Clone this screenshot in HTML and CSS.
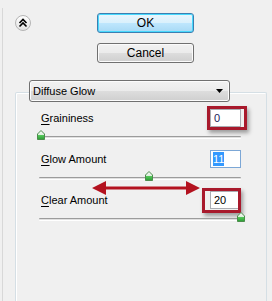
FILE: index.html
```html
<!DOCTYPE html>
<html>
<head>
<meta charset="utf-8">
<link rel="stylesheet" href="styles.css">
</head>
<body>
<div class="page">
  <div class="top">
    <div class="collapse">
      <svg width="16" height="16" viewBox="0 0 16 16">
        <defs>
          <linearGradient id="cg" x1="0" y1="0" x2="0" y2="1">
            <stop offset="0" stop-color="#ffffff"/>
            <stop offset="1" stop-color="#e2e2e2"/>
          </linearGradient>
        </defs>
        <circle cx="8" cy="8" r="7.5" fill="url(#cg)" stroke="#b4b4b4"/>
        <path d="M4.5 8 L8 4.5 L11.5 8" fill="none" stroke="#000" stroke-width="1.6"/>
        <path d="M4.5 11.5 L8 8 L11.5 11.5" fill="none" stroke="#000" stroke-width="1.6"/>
      </svg>
    </div>
    <div class="buttons">
      <div class="btn btn-default">OK</div>
      <div class="btn">Cancel</div>
    </div>
  </div>

  <div class="group">
    <div class="select">
      <span>Diffuse Glow</span>
      <svg class="caret" width="7" height="4" viewBox="0 0 7 4"><path d="M0 0 H7 L3.5 4 Z" fill="#000"/></svg>
    </div>

    <div class="rows">
      <div class="row">
        <div class="head">
          <span class="label"><u>G</u>raininess</span>
          <div class="field f1">0<span class="mark m1"></span></div>
        </div>
        <div class="track">
          <svg class="thumb t1" width="8" height="10" viewBox="0 0 8 10"><polygon points="4,0.5 7.5,4 7.5,9.5 0.5,9.5 0.5,4" fill="url(#tg)" stroke="#4c8c4c"/></svg>
        </div>
      </div>
      <div class="row">
        <div class="head">
          <span class="label"><u>G</u>low Amount</span>
          <div class="field f2"><span class="sel">11</span></div>
        </div>
        <div class="track">
          <svg class="thumb t2" width="8" height="10" viewBox="0 0 8 10"><polygon points="4,0.5 7.5,4 7.5,9.5 0.5,9.5 0.5,4" fill="url(#tg)" stroke="#4c8c4c"/></svg>
        </div>
      </div>
      <div class="row">
        <div class="head">
          <span class="label"><u>C</u>lear Amount</span>
          <div class="field f3">20<span class="mark m3"></span></div>
        </div>
        <div class="track">
          <svg class="thumb t3" width="8" height="10" viewBox="0 0 8 10"><polygon points="4,0.5 7.5,4 7.5,9.5 0.5,9.5 0.5,4" fill="url(#tg)" stroke="#4c8c4c"/></svg>
        </div>
      </div>
    </div>
  </div>

  <svg class="defs" width="0" height="0">
    <defs>
      <linearGradient id="tg" x1="0" y1="0" x2="0" y2="1">
        <stop offset="0" stop-color="#fafafa"/>
        <stop offset="0.45" stop-color="#dff0df"/>
        <stop offset="0.55" stop-color="#52c658"/>
        <stop offset="1" stop-color="#2c9d35"/>
      </linearGradient>
    </defs>
  </svg>

  <svg class="arrow" width="112" height="16" viewBox="0 0 112 16">
    <path d="M1 8 L15 1 L15 6.5 L95 6.5 L95 1 L109 8 L95 15 L95 9.5 L15 9.5 L15 15 Z" fill="#b3121f"/>
  </svg>
</div>
</body>
</html>
```
FILE: styles.css
```css
html, body {
  margin: 0;
  padding: 0;
  background: #f0f0f0;
}
body {
  font-family: "Liberation Sans", Arial, sans-serif;
  font-size: 11px;
  color: #000;
  width: 272px;
  height: 301px;
  overflow: hidden;
}
.page {
  position: relative;
  margin: 8px 0 0 2px;
  height: 293px;
  border-left: 1px solid #d8d8d8;
}
.top {
  display: flex;
  align-items: flex-start;
  padding-top: 5px;
}
.collapse {
  margin-left: 12px;
  margin-top: 2px;
  width: 16px;
  height: 16px;
}
.collapse svg { display: block; }
.buttons {
  margin-left: 66px;
  display: flex;
  flex-direction: column;
  gap: 10px;
}
.btn {
  box-sizing: border-box;
  width: 97px;
  height: 20px;
  border: 1px solid #707070;
  border-radius: 3px;
  background: linear-gradient(#f2f2f2 0%, #ebebeb 50%, #dddddd 51%, #cfcfcf 100%);
  box-shadow: inset 0 0 0 1px #fbfbfb;
  font-size: 12px;
  line-height: 18px;
  text-align: center;
}
.btn-default {
  border-color: #3c7fb1;
  background: linear-gradient(#eaf6fd 0%, #d9f0fc 50%, #bee6fd 51%, #a7d9f5 100%);
  box-shadow: inset 0 0 0 1px #48d9fd;
}
.group {
  box-sizing: border-box;
  margin-left: 12px;
  margin-top: 29px;
  width: 252px;
  height: 209px;
  border: 1px solid #d5dfe5;
  border-bottom: 0;
  box-shadow: inset 1px 1px 0 #fff;
  border-radius: 2px 2px 0 0;
}
.select {
  box-sizing: border-box;
  position: relative;
  margin-left: 13px;
  margin-top: -13px;
  width: 201px;
  height: 22px;
  border: 1px solid #707070;
  border-radius: 3px;
  background: linear-gradient(#f2f2f2 0%, #ebebeb 50%, #dddddd 51%, #cfcfcf 100%);
  box-shadow: inset 0 0 0 1px #fcfcfc;
  display: flex;
  align-items: center;
  justify-content: space-between;
  padding: 0 6px 0 3px;
  font-size: 11px;
}
.caret { display: block; }
.defs { position: absolute; }
.rows {
  padding: 4px 25px 0 23px;
}
.row {
  height: 41px;
}
.head {
  height: 24px;
  display: flex;
  align-items: center;
  justify-content: space-between;
}
.label {
  margin-left: 2px;
}
.label u {
  text-decoration-thickness: 1px;
  text-underline-offset: 2px;
}
.field {
  position: relative;
  box-sizing: border-box;
  width: 31px;
  height: 18px;
  background: #fff;
  border: 1px solid #abadb3;
  padding-left: 3px;
  line-height: 16px;
  font-size: 11px;
}
.f1 { color: #1a1a5a; }
.f2 {
  border-color: #7ca7d6;
  padding-left: 2px;
}
.sel {
  background: #3399ff;
  color: #fff;
  padding: 1px 0;
}
.mark {
  position: absolute;
  border: 3px solid #a8192c;
  box-shadow: 2px 3px 4px rgba(0, 0, 0, 0.35);
}
.m1 {
  left: -4px;
  top: -4px;
  width: 34px;
  height: 18px;
}
.m3 {
  left: -9px;
  top: -4px;
  width: 33px;
  height: 19px;
}
.track {
  position: relative;
  margin-top: 6px;
  height: 3px;
  border-radius: 1px;
  background: linear-gradient(#9c9c9c 0, #9c9c9c 1px, #e0e0e0 1px, #e0e0e0 2px, #ffffff 2px);
}
.thumb {
  position: absolute;
  top: -6px;
  display: block;
}
.t1 { left: -2px; }
.t2 { left: 106px; }
.t3 { left: 198px; }
.arrow {
  position: absolute;
  left: 88px;
  top: 172px;
}
```
